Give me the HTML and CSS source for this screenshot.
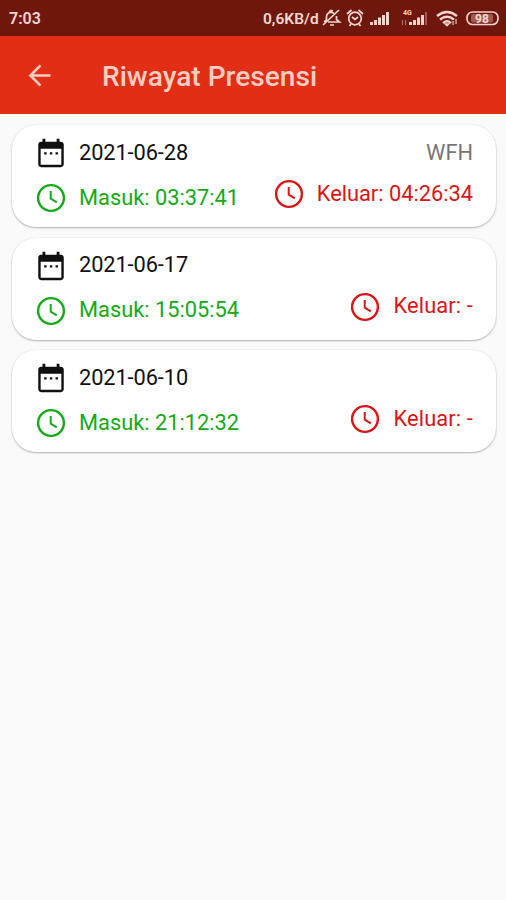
FILE: index.html
```html
<!DOCTYPE html>
<html lang="id">
<head>
<meta charset="utf-8">
<title>Riwayat Presensi</title>
<link rel="stylesheet" href="styles.css">
</head>
<body>
<svg class="defs" aria-hidden="true">
  <symbol id="clock" viewBox="0 0 24 24"><circle cx="12" cy="12" r="9.1" fill="none" stroke="currentColor" stroke-width="1.7"/><path d="M11.800 7v5.500l4.300 2.600" fill="none" stroke="currentColor" stroke-width="1.400"/></symbol>
  <symbol id="calendar" viewBox="0 0 24 24"><path fill="currentColor" fill-rule="evenodd" d="M19 4h-1V2h-2v2H8V2H6v2H5C3.900 4 3 4.900 3 6v14c0 1.100.9 2 2 2h14c1.100 0 2-.9 2-2V6c0-1.100-.9-2-2-2zm.3 16.300H4.700V9h14.600zM7.200 11.400h1.700v1.700H7.200zm4 0h1.700v1.700h-1.700zm4 0h1.700v1.700h-1.700z"/></symbol>
</svg>
<div class="status">
  <span class="time">7:03</span>
  <span class="speed">0,6KB/d</span>
  <svg class="system" viewBox="0 0 180 36" fill="none" stroke="currentColor" stroke-width="1.7">
    <path d="M-2 22l2.500-2.500v-3a4.500 4.500 0 0 1 8-2.500M10.500 16v3.500l3 2.500H2M4 25h4M3 12l2-1.500 2 .500M-3 25L13 10"/>
    <circle cx="29" cy="18.500" r="6.300"/><path d="M26 17l3 2.500 3-2.500M21 14l4.500-4M32.500 10l4.500 4M25 24l-1.500 2M33 24l1.500 2"/>
    <g stroke="none" fill="currentColor">
      <path d="M44 22h3v3h-3zM48 20h3v5h-3zM52 17.500h3v7.500h-3zM56 15h3v10h-3zM60 12h3v13h-3z"/>
      <path d="M83 22h3v3h-3zM87 20h3v5h-3zM91 17.500h3v7.500h-3zM95 15h3v10h-3z"/>
      <path d="M99 12h2v13h-2z" opacity=".35"/>
      <path d="M76 20h1v5h-1zM79 20h1v5h-1z" opacity=".5"/>
      <text class="network" x="77" y="14.500">4G</text>
    </g>
    <path stroke-width="2.300" d="M111 16q10-8 20 0M114 19.500q7-5.500 14 0M117 23q4-3.500 8 0"/>
    <path fill="currentColor" d="M119.500 24h3L121 25.500z"/><path opacity=".65" d="M127 25v-4M130 24v-5"/>
    <rect x="141" y="12" width="31" height="12.500" rx="5.500"/>
    <rect x="145" y="14" width="22" height="8.500" rx="2" fill="currentColor" opacity=".35" stroke="none"/>
    <text class="battery" x="156" y="22.500" text-anchor="middle" fill="currentColor" stroke="none">98</text>
  </svg>
</div>
<header class="bar">
  <svg class="back" viewBox="0 0 24 24" fill="none" stroke="currentColor" stroke-width="2.700"><path d="M23 12H2M12.500 1.500L2 12l10.500 10.500"/></svg>
  <h1>Riwayat Presensi</h1>
</header>
<main>
  <article class="card">
    <div class="entry">
      <div class="line"><svg class="icon"><use href="#calendar"/></svg><span class="date">2021-06-28</span></div>
      <div class="line in"><svg class="icon"><use href="#clock"/></svg><span>Masuk: 03:37:41</span></div>
    </div>
    <div class="exit">
      <div class="mode">WFH</div>
      <div class="line out"><svg class="icon"><use href="#clock"/></svg><span>Keluar: 04:26:34</span></div>
    </div>
  </article>
  <article class="card">
    <div class="entry">
      <div class="line"><svg class="icon"><use href="#calendar"/></svg><span class="date">2021-06-17</span></div>
      <div class="line in"><svg class="icon"><use href="#clock"/></svg><span>Masuk: 15:05:54</span></div>
    </div>
    <div class="exit">
      <div class="mode"></div>
      <div class="line out empty"><svg class="icon"><use href="#clock"/></svg><span>Keluar: -</span></div>
    </div>
  </article>
  <article class="card">
    <div class="entry">
      <div class="line"><svg class="icon"><use href="#calendar"/></svg><span class="date">2021-06-10</span></div>
      <div class="line in"><svg class="icon"><use href="#clock"/></svg><span>Masuk: 21:12:32</span></div>
    </div>
    <div class="exit">
      <div class="mode"></div>
      <div class="line out empty"><svg class="icon"><use href="#clock"/></svg><span>Keluar: -</span></div>
    </div>
  </article>
</main>
</body>
</html>
```

FILE: styles.css
```css
* { box-sizing: border-box; }
body { margin: 0; min-height: 900px; background: #fafafa; font-family: Roboto, sans-serif; color: #101010; }
.defs { display: none; }
.status { height: 36px; display: flex; align-items: center; padding: 2px 0 0 9px; background: #70170d; color: #f3d5cf; font-size: 16px; font-weight: 600; line-height: 20px; }
.speed { margin-left: auto; font-size: 15.500px; width: 59px; white-space: nowrap; }
.system { width: 180px; height: 36px; margin: -2px 0 0 4px; flex: none; overflow: visible; }
.network { font-size: 7px; font-weight: 700; }
.battery { font-size: 12px; font-weight: 700; }
.bar { height: 78px; display: flex; align-items: center; padding-left: 28px; background: #e32e16; color: #fccdc2; }
.back { width: 24px; height: 23px; }
h1 { margin: 4px 0 0 50px; font-size: 28.100px; font-weight: 500; line-height: 32px; white-space: nowrap; }
main { padding: 11.200px 10px 0 12px; display: grid; gap: 10.500px; }
.card { height: 102px; display: flex; justify-content: space-between; padding: 11.200px 23px 0 22px; border-radius: 24px; background: #fff; box-shadow: 0 1px 2px rgba(0,0,0,.28), 0 0 2px rgba(0,0,0,.08); font-size: 21.800px; line-height: 34px; }
.line { display: flex; align-items: center; height: 34px; white-space: nowrap; }
.icon { width: 34px; height: 34px; margin-right: 11px; flex: none; }
.date { margin-top: -1px; letter-spacing: -.1px; }
.in { margin-top: 11px; color: #14aa18; }
.in span, .out span { margin-top: -1px; }
.exit { display: flex; flex-direction: column; align-items: flex-end; }
.mode { height: 34px; color: #777; }
.out { margin-top: 7px; color: #db1515; }
.empty span { letter-spacing: .15px; }
```
